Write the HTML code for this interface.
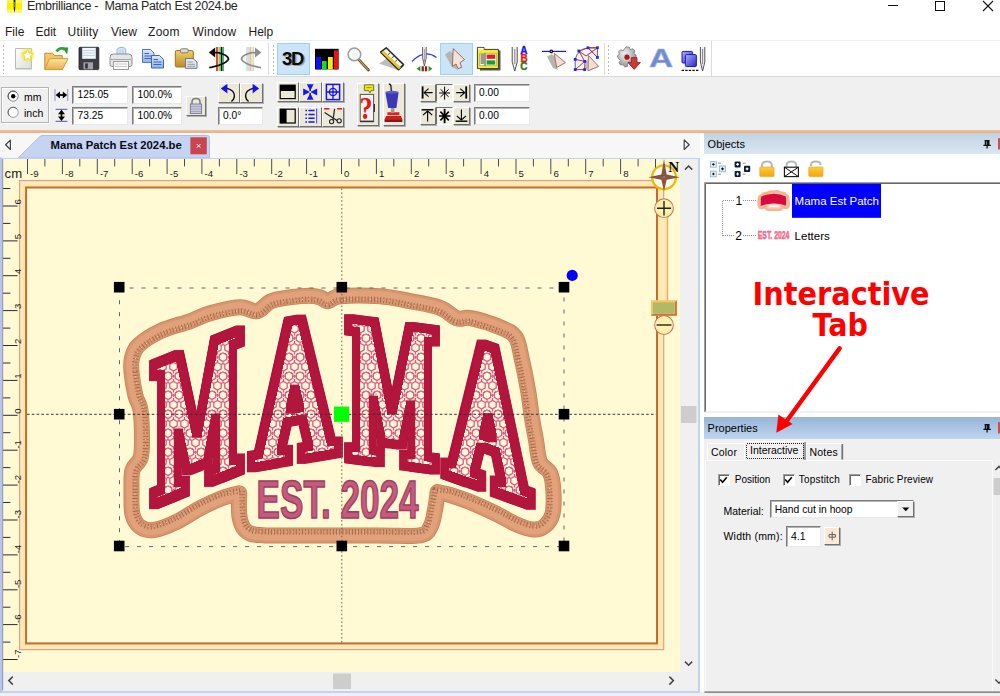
<!DOCTYPE html>
<html>
<head>
<meta charset="utf-8">
<title>Embrilliance - Mama Patch Est 2024.be</title>
<style>
html,body{margin:0;padding:0;}
body{width:1000px;height:696px;position:relative;overflow:hidden;background:#f0f0f0;font-family:"Liberation Sans",sans-serif;font-size:12px;color:#000;}
.abs{position:absolute;}
svg{display:block;}

#titlebar{left:0;top:0;width:1000px;height:20px;background:#fff;}
#menubar{left:0;top:20px;width:1000px;height:20px;background:#fff;}
#menubar span{position:absolute;top:4.5px;font-size:12px;line-height:15px;color:#1c1c1c}
#tb1{left:0;top:40px;width:1000px;height:37px;background:#fff;border-top:1px solid #f0f0f0;border-bottom:1px solid #d9d9d9;box-sizing:border-box;}
#tb2{left:0;top:76px;width:1000px;height:54px;background:#f0f0f0;}
#orange{left:0;top:130px;width:1000px;height:2.5px;background:linear-gradient(#efc29a,#e6b083);}
#tabstrip{left:0;top:132.5px;width:700px;height:25px;background:#f7f7f7;}
.inp{position:absolute;background:#fff;border:1px solid #7b7b7b;border-right-color:#e8e8e8;border-bottom-color:#e8e8e8;box-shadow:inset 1px 1px 0 #b4b4b4;box-sizing:border-box;font-size:10.2px;line-height:16px;padding-left:4.6px;color:#000;white-space:pre;}
.btn{position:absolute;background:#ece9d8;border:1px solid #fff;border-right-color:#707070;border-bottom-color:#707070;box-shadow:1px 1px 0 #b0b0b0;box-sizing:border-box;}
.btn.down{border-color:#707070 #fff #fff #707070;box-shadow:none;background:#f4f2e8;}
.hl{position:absolute;background:#cce4f7;border:1px solid #99d1ff;box-sizing:border-box;}
.grip{position:absolute;width:1px;top:4px;height:29px;background-image:linear-gradient(#b8b8b8 50%,transparent 50%);background-size:1px 4px;}
.sep{position:absolute;width:1px;top:2px;height:32px;background:#dcdcdc;}
.ico{position:absolute;overflow:visible;}


#canvasframe{left:0;top:157.5px;width:700px;height:535px;background:#c3d2f2;}
#canvas{left:3px;top:159px;width:677px;height:513px;background:#fffad4;overflow:hidden;}
#vscroll{left:680px;top:159px;width:17.5px;height:513px;background:#f0f0f0;}
#hscroll{left:3px;top:672px;width:694.5px;height:18.5px;background:#f0f0f0;}


#rightgap{left:700px;top:132.5px;width:300px;height:559.5px;background:#fff;}
.phead{position:absolute;left:704px;width:296px;font-size:11px;line-height:14px;}
.phead span{position:absolute;left:3.6px;}
.lbl{position:absolute;font-size:10.5px;line-height:12px;white-space:pre;color:#000;}
.cb{position:absolute;width:12px;height:12px;background:#fff;border:1px solid #a0a0a0;border-right-color:#fff;border-bottom-color:#fff;box-shadow:inset 1px 1px 0 #696969;box-sizing:border-box;}

</style>
</head>
<body>
<div id="titlebar" class="abs">
<svg class="abs" style="left:7px;top:0" width="16" height="13" viewBox="0 0 16 13"><rect x="0" y="0" width="15" height="12.5" fill="#fbf200"/><rect x="0" y="0" width="15" height="3" fill="#fdf64a"/><rect x="0" y="9.5" width="15" height="3" fill="#fdf760"/><path d="M6.6 0 L8.4 0 L8.2 9 L7.5 12.5 L6.8 9 Z" fill="#1a1a1a"/><path d="M7.5 2 L7.5 7" stroke="#ddd" stroke-width="0.5"/></svg>
<span class="abs" style="left:27px;top:-1px;font-size:12.5px;letter-spacing:-0.33px;white-space:pre;line-height:15px;color:#262626">Embrilliance -  Mama Patch Est 2024.be</span>
<svg class="abs" style="left:880px;top:0" width="120" height="14" viewBox="0 0 120 14"><path d="M8 5.5 H18" stroke="#111" stroke-width="1"/><rect x="55.5" y="1.5" width="9" height="9" fill="none" stroke="#111" stroke-width="1"/><path d="M103 1 L113 11 M113 1 L103 11" stroke="#111" stroke-width="1.1"/></svg>
</div>
<div id="menubar" class="abs">
<span style="left:5px">File</span><span style="left:35.5px">Edit</span><span style="left:67.5px;letter-spacing:0.25px">Utility</span><span style="left:111px">View</span><span style="left:148px;letter-spacing:0.3px">Zoom</span><span style="left:192.5px;letter-spacing:0.2px">Window</span><span style="left:248.5px">Help</span>
</div>
<div id="tb2" class="abs"><div class="abs" style="left:1px;top:11px;width:48px;height:36px;border:1px solid #b4b4b4;box-shadow:1px 1px 0 #fff, inset 1px 1px 0 #fff;box-sizing:border-box"></div>
<span class="abs" style="left:24px;top:14.5px;font-size:10.5px;line-height:12px">mm</span>
<span class="abs" style="left:24px;top:30.5px;font-size:10.5px;line-height:12px">inch</span>
<div class="inp" style="left:72px;top:9.5px;width:56px;height:18px">125.05</div>
<div class="inp" style="left:72px;top:31px;width:56px;height:18px">73.25</div>
<div class="inp" style="left:132px;top:9.5px;width:50px;height:18px">100.0%</div>
<div class="inp" style="left:132px;top:31px;width:50px;height:18px">100.0%</div>
<div class="inp" style="left:217.5px;top:30.5px;width:45px;height:18.5px">0.0°</div>
<div class="inp" style="left:473.5px;top:8px;width:56px;height:18px">0.00</div>
<div class="inp" style="left:473.5px;top:31px;width:56px;height:17.5px">0.00</div>
<div class="btn" style="left:186px;top:19.5px;width:20px;height:20.5px"></div>
<div class="btn" style="left:217.5px;top:6.5px;width:22.5px;height:20.5px"></div>
<div class="btn" style="left:240px;top:6.5px;width:22.5px;height:20.5px"></div>
<div class="btn" style="left:276.7px;top:6.200000000000003px;width:22.6px;height:20.2px"></div>
<div class="btn" style="left:299.2px;top:6.200000000000003px;width:22.6px;height:20.2px"></div>
<div class="btn" style="left:321.9px;top:6.200000000000003px;width:22.6px;height:20.2px"></div>
<div class="btn" style="left:276.7px;top:30.5px;width:22.6px;height:20.2px"></div>
<div class="btn" style="left:299.2px;top:30.5px;width:22.6px;height:20.2px"></div>
<div class="btn" style="left:321.9px;top:30.5px;width:22.6px;height:20.2px"></div>
<div class="btn" style="left:356.7px;top:6.5px;width:22px;height:43px"></div>
<div class="btn" style="left:382.5px;top:6.5px;width:22px;height:43px"></div>
<div class="btn" style="left:419.5px;top:8px;width:16.8px;height:18.4px"></div>
<div class="btn down" style="left:436.2px;top:8px;width:16.8px;height:18.4px"></div>
<div class="btn" style="left:453px;top:8px;width:16.8px;height:18.4px"></div>
<div class="btn" style="left:419.5px;top:30.799999999999997px;width:16.8px;height:18.4px"></div>
<div class="btn down" style="left:436.2px;top:30.799999999999997px;width:16.8px;height:18.4px"></div>
<div class="btn" style="left:453px;top:30.799999999999997px;width:16.8px;height:18.4px"></div>
<svg class="abs" style="left:0;top:0" width="560" height="54" viewBox="0 76 560 54">
<!-- radios -->
<circle cx="13.2" cy="96.2" r="5" fill="#fff" stroke="#8a8a8a" stroke-width="1"/><path d="M9.4 99.6 A5 5 0 0 1 16.8 92.6" fill="none" stroke="#555" stroke-width="1"/><circle cx="13.2" cy="96.2" r="2.2" fill="#000"/>
<circle cx="13.2" cy="112.4" r="5" fill="#fff" stroke="#9a9a9a" stroke-width="1"/><path d="M9.4 115.8 A5 5 0 0 1 16.8 108.8" fill="none" stroke="#666" stroke-width="1"/>
<!-- width / height glyphs -->
<path d="M55 89 V101 M67.6 89 V101" stroke="#a9a9d6" stroke-width="1.3"/>
<path d="M57.5 95 H65.5" stroke="#000" stroke-width="1.8"/><path d="M55.6 95 L60 91.6 V98.4 Z M67.2 95 L62.8 91.6 V98.4 Z" fill="#000"/>
<path d="M55.6 109.4 H67.4 M55.6 121.4 H67.4" stroke="#7070c0" stroke-width="1.1"/>
<path d="M61.5 112 V119" stroke="#000" stroke-width="1.8"/><path d="M61.5 109.8 L58 114.2 H65 Z M61.5 121 L58 116.6 H65 Z" fill="#000"/>
<!-- lock -->
<path d="M192 104.5 V101.8 Q192 98.6 196 98.6 Q200 98.6 200 101.8 V104.5" fill="none" stroke="#7a7a90" stroke-width="1.5"/>
<rect x="190.4" y="104" width="11.2" height="9.6" fill="#c7c7de" stroke="#7a7a90" stroke-width="0.9"/>
<path d="M191 106.5 H201 M191 109 H201 M191 111.5 H201" stroke="#a2a2c2" stroke-width="0.9"/>
<!-- rotate left -->
<path d="M226.5 88.2 Q234.6 90.4 234.4 96 Q234.2 99.6 231.4 101.4" fill="none" stroke="#000" stroke-width="1.3"/>
<path d="M220.8 88.4 L227.4 83.8 V93.4 Z" fill="#1414ee"/>
<!-- rotate right -->
<path d="M253.6 88.2 Q245.4 90.4 245.6 96 Q245.8 99.6 248.6 101.4" fill="none" stroke="#000" stroke-width="1.3"/>
<path d="M259.2 88.4 L252.6 83.8 V93.4 Z" fill="#1414ee"/>
<!-- grid icons row1 -->
<rect x="279.6" y="84.6" width="16.2" height="14.6" fill="#000"/><rect x="280.8" y="91" width="13.8" height="7" fill="#ece9d8"/>
<g fill="#1616f2"><path d="M306.8 84.2 H313.6 L311.2 89 H309.2 Z"/><path d="M306.8 99.8 H313.6 L311.2 95 H309.2 Z"/><path d="M303.2 88.6 V95.4 L308 93 V91 Z"/><path d="M317.2 88.6 V95.4 L312.4 93 V91 Z"/><rect x="309.4" y="88" width="1.6" height="8"/><rect x="306.4" y="91.2" width="7.6" height="1.6"/></g><circle cx="310.2" cy="92" r="1.1" fill="#fff"/>
<rect x="326.4" y="84.4" width="13.2" height="15.2" fill="#ece9d8" stroke="#1616f2" stroke-width="1.5"/><circle cx="333" cy="92" r="3.6" fill="none" stroke="#1616f2" stroke-width="1.4"/><path d="M333 84.4 V99.6 M326.4 92 H339.6" stroke="#1616f2" stroke-width="1.3"/>
<!-- grid icons row2 -->
<rect x="279.6" y="108.6" width="16.2" height="15" fill="#000"/><rect x="286.6" y="109.8" width="8" height="12.6" fill="#ece9d8"/>
<path d="M305.4 110.6 H314.6 M305.4 114.4 H314.6 M305.4 118.2 H314.6 M305.4 122 H314.6" stroke="#1616f2" stroke-width="1.5" stroke-dasharray="1.6 1.4 20"/><path d="M316.6 108.6 V123.4" stroke="#5a5af6" stroke-width="1.2"/>
<path d="M324.2 108.8 H329.4 M337.2 108.8 H342" stroke="#f01212" stroke-width="1.6"/>
<path d="M324.6 112.4 L337 120.4 M334.6 108.8 L333 120.2" stroke="#222" stroke-width="1.2"/>
<circle cx="331.6" cy="121.6" r="2.1" fill="none" stroke="#222" stroke-width="1.1"/><circle cx="339.2" cy="120.8" r="2.1" fill="none" stroke="#222" stroke-width="1.1"/>
<!-- question -->
<rect x="360.2" y="94.4" width="13.4" height="26.6" fill="#f4f4f4" stroke="#555" stroke-width="1"/><path d="M374.4 104 V112" stroke="#333" stroke-width="1.2"/><path d="M360 121.6 H374" stroke="#333" stroke-width="1.2"/>
<path d="M364.4 84.8 H373.6 V90.6 H371 L370 93 L368.6 90.6 H364.4 Z" fill="#f2e81a" stroke="#5a5a10" stroke-width="0.8"/><path d="M366.4 87.6 H371.6" stroke="#8a8a30" stroke-width="0.9"/>
<text x="359.4" y="118.6" font-family="Liberation Serif, serif" font-weight="bold" font-size="31" fill="#f01010" textLength="13" lengthAdjust="spacingAndGlyphs">?</text>
<!-- vacuum -->
<path d="M388.8 84 Q391 84 391 87 L392.8 112" fill="none" stroke="#222" stroke-width="1.4"/><path d="M392.4 86 L393 112" stroke="#ddd" stroke-width="1"/>
<path d="M385.4 92.4 H398.6 L396.4 108 H388.2 Z" fill="#3a3ab8"/><ellipse cx="392" cy="92.2" rx="6.6" ry="1.4" fill="#5c5cd0"/>
<rect x="387.4" y="112.2" width="12" height="3" fill="#f01c1c"/><path d="M386 116 H401 L402.4 119.6 H384.6 Z" fill="#d41c1c"/><rect x="384.6" y="119.2" width="17.8" height="2.8" fill="#8a1616"/>
<rect x="391" y="108" width="3.4" height="5" fill="#999"/>
<!-- align icons -->
<g stroke="#000" fill="none">
<path d="M422.6 86.4 V98.6" stroke-width="1.8"/><path d="M423.6 92.6 H432.6 M424 92.6 L428.6 88.6 M424 92.6 L428.6 96.6" stroke-width="1.1"/>
<path d="M444.6 86.6 V99.6 M439.2 93 H450 M440.6 89.4 L448.6 96.8 M448.6 89.4 L440.6 96.8" stroke-width="1"/>
<path d="M466.2 86.4 V98.6" stroke-width="1.8"/><path d="M465.2 92.6 H456.2 M464.8 92.6 L460.2 88.6 M464.8 92.6 L460.2 96.6" stroke-width="1.1"/>
<path d="M421.6 109.8 H433.4" stroke-width="1.4"/><path d="M427.6 110.6 V121.6 M427.6 111 L423 115.2 M427.6 111 L432.2 115.2" stroke-width="1.1"/>
<path d="M444.6 108.8 V123.2" stroke-width="1.9"/><path d="M439 116 H450.4 M440.4 111.6 L448.8 120.4 M448.8 111.6 L440.4 120.4" stroke-width="1.6"/>
<path d="M455.6 121.2 H467.4" stroke-width="1.4"/><path d="M461.4 120.4 V109.6 M461.4 120 L456.8 115.8 M461.4 120 L466 115.8" stroke-width="1.1"/>
</g>
</svg>
</div>
<div id="tb1" class="abs">
<div class="grip" style="left:3px"></div>
<div class="sep" style="left:268px"></div><div class="grip" style="left:273px"></div>
<div class="sep" style="left:604px"></div><div class="grip" style="left:608px"></div>
<div class="sep" style="left:711px;top:0;height:35px"></div>
<div class="hl" style="left:277px;top:2px;width:33px;height:32px"></div>
<div class="hl" style="left:440px;top:2px;width:33px;height:32px"></div>
<div class="abs" style="left:0;top:-1px">
<svg class="abs" style="left:0;top:0" width="720" height="36" viewBox="0 40 720 36">
<defs>
<linearGradient id="gFold" x1="0" y1="0" x2="0" y2="1"><stop offset="0" stop-color="#fbe3a0"/><stop offset="1" stop-color="#e9b04a"/></linearGradient>
<linearGradient id="gPaper" x1="0" y1="0" x2="1" y2="1"><stop offset="0" stop-color="#ffffff"/><stop offset="1" stop-color="#d8dcd8"/></linearGradient>
<linearGradient id="gBlueDoc" x1="0" y1="0" x2="0" y2="1"><stop offset="0" stop-color="#dfe9fb"/><stop offset="1" stop-color="#8fb0ea"/></linearGradient>
<linearGradient id="gClip" x1="0" y1="0" x2="0" y2="1"><stop offset="0" stop-color="#f2cf6a"/><stop offset="1" stop-color="#b98d28"/></linearGradient>
<linearGradient id="gBlueSq" x1="0" y1="0" x2="1" y2="1"><stop offset="0" stop-color="#a9b6f4"/><stop offset="1" stop-color="#2a22c8"/></linearGradient>
<radialGradient id="gGear" cx="0.4" cy="0.35" r="0.7"><stop offset="0" stop-color="#f4f4f4"/><stop offset="1" stop-color="#8e8e8e"/></radialGradient>
<radialGradient id="gStar" cx="0.5" cy="0.5" r="0.5"><stop offset="0.45" stop-color="#f5ea3a"/><stop offset="1" stop-color="#f5ea3a" stop-opacity="0"/></radialGradient>
</defs>
<!-- new -->
<path d="M15.5 48.5 H31.5 V68.5 H15.5 Z" fill="url(#gPaper)" stroke="#b9bdb9" stroke-width="1"/>
<path d="M15 69.6 H32" stroke="#d8d8d8" stroke-width="1"/>
<circle cx="27.6" cy="55" r="8" fill="url(#gStar)"/>
<path d="M27.6 49.6 L29.3 53.2 L33.2 53.6 L30.3 56.3 L31.1 60.2 L27.6 58.2 L24.1 60.2 L24.9 56.3 L22 53.6 L25.9 53.2 Z" fill="#fff" stroke="#ecd820" stroke-width="0.9"/>
<!-- open -->
<path d="M44.8 53.2 H52.5 L54.5 55.6 H62.2 V69.4 H44.8 Z" fill="#f3c768" stroke="#c88b2e" stroke-width="1"/>
<path d="M44.8 69.6 L49.4 58.6 H68 L62.4 69.6 Z" fill="url(#gFold)" stroke="#d29a3a" stroke-width="1"/>
<path d="M56.5 51.5 Q60 46.5 64.5 49.5" fill="none" stroke="#3aa03a" stroke-width="2.6"/>
<path d="M62 47.2 L68.2 47.6 L67.2 54.4 Z" fill="#2f9a32"/>
<!-- save -->
<path d="M79 48.3 Q79 47.3 80 47.3 H97.8 Q98.8 47.3 98.8 48.3 V68.6 Q98.8 69.6 97.8 69.6 H80 Q79 69.6 79 68.6 Z" fill="#3b3d42" stroke="#1d1e21" stroke-width="0.8"/>
<rect x="82.2" y="47.8" width="13.6" height="11" fill="#f3f6fb"/>
<path d="M82.2 50.5 H95.8 M82.2 53 H95.8 M82.2 55.5 H95.8" stroke="#c6d2e8" stroke-width="1"/>
<rect x="83.5" y="62.3" width="9.5" height="7" fill="#9fa3a8"/>
<rect x="85.2" y="63.4" width="2.6" height="5" fill="#2e3034"/>
<!-- print -->
<path d="M117 54.5 V50.5 Q117 47.4 121.4 47.4 Q125.8 47.4 125.8 50.5 V54.5 Z" fill="#d6e6fb" stroke="#8fb1e2" stroke-width="1"/>
<path d="M120 49.4 V54 M122.8 49.4 V54" stroke="#a9c6f0" stroke-width="1"/>
<path d="M110 57.5 Q110 54 113.5 54 H128.5 Q132 54 132 57.5 V64.5 Q132 66.5 130 66.5 H112 Q110 66.5 110 64.5 Z" fill="#e4e5e4" stroke="#8d8f8d" stroke-width="1"/>
<path d="M110.6 59.5 H131.4" stroke="#a6a8a6" stroke-width="1"/>
<rect x="113.5" y="61.5" width="15" height="8" fill="#fafafa" stroke="#9a9c9a" stroke-width="1"/>
<path d="M115 64 H127 M115 66.5 H127" stroke="#c9cbc9" stroke-width="1"/>
<!-- copy -->
<path d="M142.5 49.5 H150.5 L154 53 V62.5 H142.5 Z" fill="url(#gBlueDoc)" stroke="#4f79c9" stroke-width="1"/>
<path d="M144.5 53.5 H149 M144.5 56 H152 M144.5 58.5 H152" stroke="#3b63b8" stroke-width="1"/>
<path d="M151.5 55.5 H159.5 L163.5 59.5 V68 H151.5 Z" fill="url(#gBlueDoc)" stroke="#3d66bd" stroke-width="1"/>
<path d="M153.5 59.5 H158 M153.5 62 H161.5 M153.5 64.5 H161.5" stroke="#3b63b8" stroke-width="1"/>
<!-- paste -->
<rect x="175.3" y="50.5" width="18" height="16.5" rx="1.5" fill="url(#gClip)" stroke="#9a7420" stroke-width="1"/>
<rect x="180.5" y="48.8" width="7.6" height="4" rx="1" fill="#dcdcdc" stroke="#77756c" stroke-width="0.9"/>
<path d="M185.5 58.5 H193 L197 62 V68.3 H185.5 Z" fill="#e4e7ee" stroke="#6f7684" stroke-width="1"/>
<path d="M187.3 62 H193 M187.3 64.3 H195 M187.3 66.3 H195" stroke="#8b93a3" stroke-width="0.9"/>
<!-- flip horizontal (active) -->
<path d="M217 47 V71" stroke="#e01010" stroke-width="1.6"/><path d="M218.6 47 V71" stroke="#f6e11c" stroke-width="1.4"/><path d="M220 47 V71" stroke="#33c8d8" stroke-width="1.4"/><path d="M221.5 47 V71" stroke="#111" stroke-width="1.3"/><path d="M223 47 V71" stroke="#169c2a" stroke-width="1.5"/>
<path d="M213.5 52.6 H218 Q228.5 55 228.5 59.3 Q226 64 212 67.2 L209.3 67.6" fill="none" stroke="#0a0a0a" stroke-width="1.7"/>
<path d="M208.8 52.6 L215.2 47.6 V57.6 Z" fill="#0a0a0a"/>
<!-- flip horizontal (gray) -->
<path d="M247 47 V71" stroke="#b6e4dc" stroke-width="1.5"/><path d="M248.6 47 V71" stroke="#dcdcdc" stroke-width="1.3"/><path d="M250.2 47 V71" stroke="#f4b0b0" stroke-width="1.5"/><path d="M251.8 47 V71" stroke="#f3eba0" stroke-width="1.4"/><path d="M253.3 47 V71" stroke="#bfe6c4" stroke-width="1.4"/>
<path d="M256.5 52.6 H252 Q241.5 55 241.5 59.3 Q244 64 258 67.2 L261 67.6" fill="none" stroke="#8e8e8e" stroke-width="1.7"/>
<path d="M261.4 52.6 L255 47.6 V57.6 Z" fill="#8e8e8e"/>
<!-- 3D -->
<text x="283.3" y="66" font-family="Liberation Sans, sans-serif" font-weight="bold" font-size="18.5" letter-spacing="-1.2" fill="#9a9a9a">3D</text>
<text x="282" y="64.8" font-family="Liberation Sans, sans-serif" font-weight="bold" font-size="18.5" letter-spacing="-1.2" fill="#0a0a0a">3D</text>
<!-- bars -->
<rect x="315" y="48.8" width="23.6" height="20.6" fill="#000"/>
<rect x="316" y="56.8" width="5" height="12.6" fill="#0a12f0"/>
<rect x="322" y="61" width="4.6" height="8.4" fill="#12e020"/>
<rect x="328" y="57" width="4.8" height="12.4" fill="#f4ea12"/>
<rect x="334" y="50.4" width="4.2" height="19" fill="#f01212"/>
<!-- magnifier -->
<path d="M358.8 59.6 L368.4 70" stroke="#6b4a2a" stroke-width="2.8" stroke-linecap="round"/>
<path d="M358.8 59.6 L368 69.6" stroke="#c89a5a" stroke-width="1.2" stroke-linecap="round"/>
<circle cx="354.4" cy="54.4" r="6.3" fill="#f6f6f6" stroke="#9c9c9c" stroke-width="1.5"/>
<path d="M350.3 53.4 Q351 50.4 354 50" fill="none" stroke="#fff" stroke-width="1.4"/>
<!-- ruler -->
<path d="M379 63.5 L392 55.5 L404 66.5 L399 70.5 Z" fill="#bdbdbd"/>
<path d="M380.6 52.2 L386.2 47.8 L403.6 64.6 L398.4 69.6 Z" fill="#f6f6f2" stroke="#2a2a2a" stroke-width="1.5" stroke-linejoin="round"/>
<path d="M381.4 52.6 L383.6 50.8 L400.8 67.4 L398.8 69.2 Z" fill="#f0c21e"/>
<path d="M388 54.8 L390.4 52.6 M391.6 58.2 L394 56 M395.2 61.6 L397.6 59.4" stroke="#444" stroke-width="0.9"/>
<!-- needle with arc -->
<path d="M412 61.5 Q424 48.5 436.5 57.4" fill="none" stroke="#2c38f0" stroke-width="1.2"/>
<path d="M422.6 47 V58 L424.4 66 L426.2 58 V47" fill="#f2f2f2" stroke="#555" stroke-width="0.9"/>
<path d="M424.4 49 V62" stroke="#777" stroke-width="0.7"/>
<path d="M416.6 68.8 L420.4 66 V71.6 Z M432.4 68.8 L428.6 66 V71.6 Z" fill="#1c9c2c"/>
<rect x="421.6" y="66.3" width="2.3" height="5" fill="#a01818"/><rect x="424.9" y="66.3" width="2.3" height="5" fill="#a01818"/>
<!-- pointer -->
<path d="M445 54.5 L450 51 L462 61 L456 64 L458 70 L452 67 Z" fill="#b5b5b5"/>
<path d="M453.2 48.6 L464.6 59.6 L460 62.6 L461.6 67.4 L458 68.6 L456 64 L452.4 66.4 Z" fill="#f3e2d8" stroke="#9c6c64" stroke-width="1" stroke-linejoin="round"/>
<!-- list / folder icon -->
<path d="M480 50.5 H500.5 V70.5 H480 Z" fill="#555"/>
<path d="M477.4 47.4 H484 V49.4 H498.4 V68.6 H477.4 Z" fill="#f6f01c" stroke="#3a3a3a" stroke-width="1"/>
<rect x="477.9" y="47.9" width="5.6" height="1.6" fill="#fff"/>
<rect x="479.8" y="53.2" width="16.4" height="12.6" fill="#fdfdf4" stroke="#8a8a60" stroke-width="0.6"/>
<path d="M480.6 55 H484 M480.6 57 H484 M480.6 59 H484 M480.6 61 H484 M480.6 63 H484" stroke="#222" stroke-width="0.9"/>
<path d="M485 53.4 V65.6" stroke="#222" stroke-width="0.9"/>
<rect x="486.6" y="54.6" width="8.6" height="4.2" fill="#f01818"/><rect x="486.6" y="60.4" width="8.6" height="4.2" fill="#1c9a2c"/>
<!-- needle ABC -->
<path d="M512.2 47 V62 L514.8 71 L517.2 62 V47" fill="#f0f0f0" stroke="#555" stroke-width="1"/>
<path d="M514.8 49 V64" stroke="#777" stroke-width="0.9"/>
<text x="520.2" y="54" font-family="Liberation Sans, sans-serif" font-weight="bold" font-size="10" fill="#1010f0" stroke="#1010f0" stroke-width="0.3">A</text>
<text x="520.4" y="62" font-family="Liberation Sans, sans-serif" font-weight="bold" font-size="10" fill="#f01010" stroke="#f01010" stroke-width="0.3">B</text>
<text x="520.2" y="70" font-family="Liberation Sans, sans-serif" font-weight="bold" font-size="10" fill="#2a7a10" stroke="#2a7a10" stroke-width="0.3">C</text>
<!-- node edit -->
<path d="M542 51.4 H566" stroke="#1818f0" stroke-width="1.2"/>
<path d="M547 56.5 L552 54 L562 64 L556 66 L558 70 L553 68 Z" fill="#b5b5b5"/>
<path d="M554.2 53.2 L565.4 62.6 L556.6 67.6 Z" fill="#f1dfd3" stroke="#a0726a" stroke-width="1" stroke-linejoin="round"/>
<circle cx="551.3" cy="51.4" r="1.9" fill="#111"/><circle cx="551.3" cy="51.4" r="0.6" fill="#ddd"/>
<!-- mesh -->
<path d="M575.2 69.6 V59 Q578 49.4 588 47.8 H597.4 V57.4" fill="#eef2fb" stroke="#555" stroke-width="0.9"/>
<path d="M575.2 59.4 L584.8 61.4 L575.2 69.6 H584.6 L584.8 61.4 L578.8 51 L588 47.8 L597.4 57.4 L588 47.8 L597.4 47.8 L586 56 L578.8 51" fill="none" stroke="#c03030" stroke-width="1"/>
<path d="M588.4 55.4 L598.6 66.4 L588 70.8 Z" fill="#f1dfd3" stroke="#a0726a" stroke-width="1" stroke-linejoin="round"/>
<path d="M584.5 62.5 L588 60 V70.6 L585 69 Z" fill="#b5b5b5"/>
<g fill="#1a2af4"><rect x="573.8" y="58" width="2.8" height="2.8"/><rect x="573.8" y="68.2" width="2.8" height="2.8"/><rect x="583.2" y="68.2" width="2.8" height="2.8"/><rect x="583.4" y="60" width="2.8" height="2.8"/><rect x="577.4" y="49.6" width="2.8" height="2.8"/><rect x="586.6" y="46.4" width="2.8" height="2.8"/><rect x="596" y="46.4" width="2.8" height="2.8"/><rect x="596" y="56" width="2.8" height="2.8"/></g>
<!-- gear -->
<path d="M626 46.8 L629.2 47.2 L630.2 49.6 L633 48.8 L635 51 L633.8 53.6 L636 55 L636 58 L633.6 59 L634 62 L631.6 63.6 L629.6 62 L627.4 63.6 L627.6 66.4 L624.6 67 L623 64.6 L620.4 65 L619 62.6 L620.6 60.4 L618.4 58.6 L617.2 56 L619.4 54.4 L618.6 51.6 L620.8 49.8 L623.2 50.8 L624.6 48.6 Z" fill="url(#gGear)" stroke="#7a7a7a" stroke-width="0.8"/>
<circle cx="626.6" cy="57" r="3.8" fill="#d8d8d8"/>
<circle cx="627" cy="57.2" r="2.6" fill="#b01818"/>
<path d="M631.4 57.6 H637 V62.6 H640.4 L634.2 69.4 L628 62.6 H631.4 Z" fill="#cc3a3a" stroke="#8e1c1c" stroke-width="0.8"/>
<!-- A -->
<text x="649" y="67.2" font-family="Liberation Sans, sans-serif" font-weight="bold" font-size="25" fill="#6f8ad0" stroke="#9fb2e2" stroke-width="0.6" textLength="24" lengthAdjust="spacingAndGlyphs">A</text>
<!-- copy + needle -->
<rect x="682" y="51.4" width="10.6" height="11.6" rx="1" fill="url(#gBlueSq)" stroke="#1c1ab4" stroke-width="1"/>
<rect x="685.4" y="54.6" width="11" height="12" rx="1" fill="url(#gBlueSq)" stroke="#1c1ab4" stroke-width="1"/>
<path d="M681.6 70.4 H699" stroke="#111" stroke-width="1.4" stroke-dasharray="2.4 1.2"/>
<path d="M700.4 47 V62 L702.6 71 L704.8 62 V47" fill="#f0f0f0" stroke="#555" stroke-width="1"/>
<path d="M702.6 49 V64" stroke="#777" stroke-width="0.9"/>
</svg>
</div>
</div>
<div id="orange" class="abs"></div>
<div id="tabstrip" class="abs">
<svg class="abs" style="left:0;top:0" width="700" height="25" viewBox="0 132.5 700 25">
<path d="M18 157.5 L39.5 136.4 Q41 135 43 135 H207.5 Q209.5 135 209.5 137 V157.5 Z" fill="#c4d4f2" stroke="#aebfe6" stroke-width="1"/>
<path d="M10.4 139.6 L10.4 149 L5.6 144.3 Z" fill="none" stroke="#444" stroke-width="1.2" stroke-linejoin="round"/>
<path d="M684.2 139.4 L684.2 149 L689.2 144.2 Z" fill="none" stroke="#444" stroke-width="1.2" stroke-linejoin="round"/>
<rect x="190.4" y="136.8" width="16.4" height="17" fill="#c9454f"/>
<path d="M196.8 143.6 L200.4 147.2 M200.4 143.6 L196.8 147.2" stroke="#fff" stroke-width="1"/>
</svg>
<span class="abs" style="left:50.5px;top:5px;font-size:11.3px;font-weight:bold;line-height:14px;white-space:pre;color:#0a0a14">Mama Patch Est 2024.be</span>
</div>
<div id="canvasframe" class="abs"></div>
<div id="canvas" class="abs">
<svg class="abs" style="left:0;top:0" width="677" height="513" viewBox="3 159 677 513" font-family="Liberation Sans, sans-serif">
<rect x="19" y="180" width="645.3" height="470.20000000000005" fill="#e2a572"/>
<rect x="20.2" y="181.2" width="642.9" height="467.80000000000007" fill="#ffe6cf"/>
<rect x="22.6" y="183.9" width="638.4" height="462.70000000000005" fill="#fdec9c"/>
<rect x="25.1" y="186.5" width="632.9" height="457.90000000000003" fill="#c26a3a"/>
<rect x="27.1" y="188.5" width="628.9" height="453.90000000000003" fill="#fffad4"/>
<rect x="663.8" y="200" width="4.4" height="105" fill="#e9a870"/>
<rect x="661.4" y="200" width="5.4" height="105" fill="#fdec9c"/>
<rect x="661.2" y="200" width="2.8" height="105" fill="#ffe6cf"/>
<path d="M27.5 159 V174" stroke="#4a4a55" stroke-width="1"/>
<text x="30.1" y="177.4" font-size="9.6" fill="#1a1a2a">-9</text>
<path d="M44.9 159 V166.4" stroke="#4a4a55" stroke-width="1"/>
<path d="M62.4 159 V174" stroke="#4a4a55" stroke-width="1"/>
<text x="65.0" y="177.4" font-size="9.6" fill="#1a1a2a">-8</text>
<path d="M79.8 159 V166.4" stroke="#4a4a55" stroke-width="1"/>
<path d="M97.3 159 V174" stroke="#4a4a55" stroke-width="1"/>
<text x="99.9" y="177.4" font-size="9.6" fill="#1a1a2a">-7</text>
<path d="M114.7 159 V166.4" stroke="#4a4a55" stroke-width="1"/>
<path d="M132.2 159 V174" stroke="#4a4a55" stroke-width="1"/>
<text x="134.8" y="177.4" font-size="9.6" fill="#1a1a2a">-6</text>
<path d="M149.6 159 V166.4" stroke="#4a4a55" stroke-width="1"/>
<path d="M167.1 159 V174" stroke="#4a4a55" stroke-width="1"/>
<text x="169.7" y="177.4" font-size="9.6" fill="#1a1a2a">-5</text>
<path d="M184.5 159 V166.4" stroke="#4a4a55" stroke-width="1"/>
<path d="M201.9 159 V174" stroke="#4a4a55" stroke-width="1"/>
<text x="204.5" y="177.4" font-size="9.6" fill="#1a1a2a">-4</text>
<path d="M219.4 159 V166.4" stroke="#4a4a55" stroke-width="1"/>
<path d="M236.8 159 V174" stroke="#4a4a55" stroke-width="1"/>
<text x="239.4" y="177.4" font-size="9.6" fill="#1a1a2a">-3</text>
<path d="M254.3 159 V166.4" stroke="#4a4a55" stroke-width="1"/>
<path d="M271.7 159 V174" stroke="#4a4a55" stroke-width="1"/>
<text x="274.3" y="177.4" font-size="9.6" fill="#1a1a2a">-2</text>
<path d="M289.2 159 V166.4" stroke="#4a4a55" stroke-width="1"/>
<path d="M306.6 159 V174" stroke="#4a4a55" stroke-width="1"/>
<text x="309.2" y="177.4" font-size="9.6" fill="#1a1a2a">-1</text>
<path d="M324.1 159 V166.4" stroke="#4a4a55" stroke-width="1"/>
<path d="M341.5 159 V174" stroke="#4a4a55" stroke-width="1"/>
<text x="344.1" y="177.4" font-size="9.6" fill="#1a1a2a">0</text>
<path d="M358.9 159 V166.4" stroke="#4a4a55" stroke-width="1"/>
<path d="M376.4 159 V174" stroke="#4a4a55" stroke-width="1"/>
<text x="379.0" y="177.4" font-size="9.6" fill="#1a1a2a">1</text>
<path d="M393.8 159 V166.4" stroke="#4a4a55" stroke-width="1"/>
<path d="M411.3 159 V174" stroke="#4a4a55" stroke-width="1"/>
<text x="413.9" y="177.4" font-size="9.6" fill="#1a1a2a">2</text>
<path d="M428.7 159 V166.4" stroke="#4a4a55" stroke-width="1"/>
<path d="M446.2 159 V174" stroke="#4a4a55" stroke-width="1"/>
<text x="448.8" y="177.4" font-size="9.6" fill="#1a1a2a">3</text>
<path d="M463.6 159 V166.4" stroke="#4a4a55" stroke-width="1"/>
<path d="M481.1 159 V174" stroke="#4a4a55" stroke-width="1"/>
<text x="483.7" y="177.4" font-size="9.6" fill="#1a1a2a">4</text>
<path d="M498.5 159 V166.4" stroke="#4a4a55" stroke-width="1"/>
<path d="M516.0 159 V174" stroke="#4a4a55" stroke-width="1"/>
<text x="518.6" y="177.4" font-size="9.6" fill="#1a1a2a">5</text>
<path d="M533.4 159 V166.4" stroke="#4a4a55" stroke-width="1"/>
<path d="M550.8 159 V174" stroke="#4a4a55" stroke-width="1"/>
<text x="553.4" y="177.4" font-size="9.6" fill="#1a1a2a">6</text>
<path d="M568.3 159 V166.4" stroke="#4a4a55" stroke-width="1"/>
<path d="M585.7 159 V174" stroke="#4a4a55" stroke-width="1"/>
<text x="588.3" y="177.4" font-size="9.6" fill="#1a1a2a">7</text>
<path d="M603.2 159 V166.4" stroke="#4a4a55" stroke-width="1"/>
<path d="M620.6 159 V174" stroke="#4a4a55" stroke-width="1"/>
<text x="623.2" y="177.4" font-size="9.6" fill="#1a1a2a">8</text>
<path d="M638.1 159 V166.4" stroke="#4a4a55" stroke-width="1"/>
<path d="M655.5 159 V174" stroke="#4a4a55" stroke-width="1"/>
<path d="M3 659.5 H17.6" stroke="#2a2a35" stroke-width="1"/>
<text transform="translate(21.2 657.9) rotate(-90)" font-size="9.6" fill="#1a1a2a">-7</text>
<path d="M3 642.1 H10.4" stroke="#2a2a35" stroke-width="1"/>
<path d="M3 624.6 H17.6" stroke="#2a2a35" stroke-width="1"/>
<text transform="translate(21.2 623.0) rotate(-90)" font-size="9.6" fill="#1a1a2a">-6</text>
<path d="M3 607.2 H10.4" stroke="#2a2a35" stroke-width="1"/>
<path d="M3 589.8 H17.6" stroke="#2a2a35" stroke-width="1"/>
<text transform="translate(21.2 588.1) rotate(-90)" font-size="9.6" fill="#1a1a2a">-5</text>
<path d="M3 572.3 H10.4" stroke="#2a2a35" stroke-width="1"/>
<path d="M3 554.9 H17.6" stroke="#2a2a35" stroke-width="1"/>
<text transform="translate(21.2 553.3) rotate(-90)" font-size="9.6" fill="#1a1a2a">-4</text>
<path d="M3 537.4 H10.4" stroke="#2a2a35" stroke-width="1"/>
<path d="M3 520.0 H17.6" stroke="#2a2a35" stroke-width="1"/>
<text transform="translate(21.2 518.4) rotate(-90)" font-size="9.6" fill="#1a1a2a">-3</text>
<path d="M3 502.5 H10.4" stroke="#2a2a35" stroke-width="1"/>
<path d="M3 485.1 H17.6" stroke="#2a2a35" stroke-width="1"/>
<text transform="translate(21.2 483.5) rotate(-90)" font-size="9.6" fill="#1a1a2a">-2</text>
<path d="M3 467.6 H10.4" stroke="#2a2a35" stroke-width="1"/>
<path d="M3 450.2 H17.6" stroke="#2a2a35" stroke-width="1"/>
<text transform="translate(21.2 448.6) rotate(-90)" font-size="9.6" fill="#1a1a2a">-1</text>
<path d="M3 432.7 H10.4" stroke="#2a2a35" stroke-width="1"/>
<path d="M3 415.3 H17.6" stroke="#2a2a35" stroke-width="1"/>
<text transform="translate(21.2 413.7) rotate(-90)" font-size="9.6" fill="#1a1a2a">0</text>
<path d="M3 397.9 H10.4" stroke="#2a2a35" stroke-width="1"/>
<path d="M3 380.4 H17.6" stroke="#2a2a35" stroke-width="1"/>
<text transform="translate(21.2 378.8) rotate(-90)" font-size="9.6" fill="#1a1a2a">1</text>
<path d="M3 363.0 H10.4" stroke="#2a2a35" stroke-width="1"/>
<path d="M3 345.5 H17.6" stroke="#2a2a35" stroke-width="1"/>
<text transform="translate(21.2 343.9) rotate(-90)" font-size="9.6" fill="#1a1a2a">2</text>
<path d="M3 328.1 H10.4" stroke="#2a2a35" stroke-width="1"/>
<path d="M3 310.6 H17.6" stroke="#2a2a35" stroke-width="1"/>
<text transform="translate(21.2 309.0) rotate(-90)" font-size="9.6" fill="#1a1a2a">3</text>
<path d="M3 293.2 H10.4" stroke="#2a2a35" stroke-width="1"/>
<path d="M3 275.7 H17.6" stroke="#2a2a35" stroke-width="1"/>
<text transform="translate(21.2 274.1) rotate(-90)" font-size="9.6" fill="#1a1a2a">4</text>
<path d="M3 258.3 H10.4" stroke="#2a2a35" stroke-width="1"/>
<path d="M3 240.9 H17.6" stroke="#2a2a35" stroke-width="1"/>
<text transform="translate(21.2 239.3) rotate(-90)" font-size="9.6" fill="#1a1a2a">5</text>
<path d="M3 223.4 H10.4" stroke="#2a2a35" stroke-width="1"/>
<path d="M3 206.0 H17.6" stroke="#2a2a35" stroke-width="1"/>
<text transform="translate(21.2 204.4) rotate(-90)" font-size="9.6" fill="#1a1a2a">6</text>
<path d="M3 188.5 H10.4" stroke="#2a2a35" stroke-width="1"/>
<text x="4.6" y="177.6" font-size="13.5" fill="#1a1a2a" textLength="17.5" lengthAdjust="spacingAndGlyphs">cm</text>

<path d="M131.5 372.0 C130.9 365.7 130.8 362.6 132.0 358.1 C133.1 353.7 133.6 349.9 138.4 345.4 C143.1 340.9 151.6 335.2 160.2 331.2 C168.9 327.1 181.8 324.2 190.2 321.2 C198.5 318.2 201.8 315.5 210.1 313.2 C218.4 310.9 232.2 307.5 240.0 307.2 C247.8 306.9 251.9 312.2 257.1 311.2 C262.3 310.2 265.5 303.5 271.2 301.2 C276.9 298.8 284.8 298.1 291.1 297.2 C297.4 296.3 304.2 295.7 309.0 295.7 C313.8 295.7 316.7 296.3 319.9 297.2 C323.0 298.1 324.7 301.4 328.0 301.2 C331.4 301.0 331.4 297.0 340.0 296.2 C348.7 295.4 368.3 295.4 380.0 296.2 C391.6 297.0 399.9 299.3 409.9 301.2 C419.9 303.1 432.0 304.8 439.8 307.7 C447.7 310.5 451.7 316.4 456.8 318.2 C462.0 319.9 463.7 316.7 470.9 318.2 C478.1 319.7 492.4 324.0 499.8 327.2 C507.3 330.3 511.9 331.5 515.6 337.0 C519.3 342.5 519.9 351.3 522.0 360.1 C524.1 369.0 526.3 380.4 528.0 390.1 C529.7 399.7 530.7 409.7 532.0 418.1 C533.3 426.4 534.7 432.7 536.0 440.1 C537.3 447.4 537.7 456.8 540.0 462.2 C542.4 467.6 547.8 468.1 550.0 472.7 C552.3 477.4 552.9 483.2 553.3 490.0 C553.7 496.9 553.9 507.9 552.5 513.9 C551.1 519.9 547.9 523.5 544.7 526.1 C541.4 528.7 537.7 529.8 533.0 529.5 C528.4 529.2 522.7 527.1 516.7 524.5 C510.6 522.0 504.5 517.8 496.7 514.0 C489.0 510.3 478.0 505.2 470.2 502.0 C462.4 498.9 455.6 496.7 450.1 495.0 C444.7 493.4 437.6 492.1 437.6 492.1 C437.6 492.1 436.2 504.1 435.0 509.9 C433.8 515.7 433.1 522.5 430.6 526.7 C428.1 531.0 428.3 533.8 419.9 535.3 C411.5 536.8 400.0 535.5 380.0 535.5 C360.0 535.5 319.5 535.5 300.0 535.5 C280.5 535.5 271.8 535.9 263.0 535.3 C254.2 534.7 251.2 534.9 247.3 532.1 C243.4 529.3 241.1 524.9 239.8 518.4 C238.4 511.9 239.2 493.2 239.2 493.2 C239.2 493.2 228.8 495.6 222.3 498.0 C215.8 500.5 207.9 504.1 200.3 508.1 C192.6 512.1 184.0 518.4 176.3 522.0 C168.6 525.7 159.9 529.2 153.9 530.0 C147.9 530.8 143.9 529.7 140.3 527.1 C136.7 524.5 134.0 520.6 132.5 514.4 C131.0 508.2 131.5 497.4 131.5 490.0 C131.5 482.6 131.0 475.4 132.5 470.1 C134.0 464.8 138.9 463.2 140.5 458.2 C142.1 453.1 142.0 448.0 142.0 440.0 C142.0 432.0 141.6 417.3 140.5 409.9 C139.4 402.6 137.0 402.2 135.5 395.9 C134.0 389.6 132.1 378.2 131.5 372.0 Z" fill="none" stroke="#c4835c" stroke-width="16" stroke-linejoin="round"/>
<path d="M131.5 372.0 C130.9 365.7 130.8 362.6 132.0 358.1 C133.1 353.7 133.6 349.9 138.4 345.4 C143.1 340.9 151.6 335.2 160.2 331.2 C168.9 327.1 181.8 324.2 190.2 321.2 C198.5 318.2 201.8 315.5 210.1 313.2 C218.4 310.9 232.2 307.5 240.0 307.2 C247.8 306.9 251.9 312.2 257.1 311.2 C262.3 310.2 265.5 303.5 271.2 301.2 C276.9 298.8 284.8 298.1 291.1 297.2 C297.4 296.3 304.2 295.7 309.0 295.7 C313.8 295.7 316.7 296.3 319.9 297.2 C323.0 298.1 324.7 301.4 328.0 301.2 C331.4 301.0 331.4 297.0 340.0 296.2 C348.7 295.4 368.3 295.4 380.0 296.2 C391.6 297.0 399.9 299.3 409.9 301.2 C419.9 303.1 432.0 304.8 439.8 307.7 C447.7 310.5 451.7 316.4 456.8 318.2 C462.0 319.9 463.7 316.7 470.9 318.2 C478.1 319.7 492.4 324.0 499.8 327.2 C507.3 330.3 511.9 331.5 515.6 337.0 C519.3 342.5 519.9 351.3 522.0 360.1 C524.1 369.0 526.3 380.4 528.0 390.1 C529.7 399.7 530.7 409.7 532.0 418.1 C533.3 426.4 534.7 432.7 536.0 440.1 C537.3 447.4 537.7 456.8 540.0 462.2 C542.4 467.6 547.8 468.1 550.0 472.7 C552.3 477.4 552.9 483.2 553.3 490.0 C553.7 496.9 553.9 507.9 552.5 513.9 C551.1 519.9 547.9 523.5 544.7 526.1 C541.4 528.7 537.7 529.8 533.0 529.5 C528.4 529.2 522.7 527.1 516.7 524.5 C510.6 522.0 504.5 517.8 496.7 514.0 C489.0 510.3 478.0 505.2 470.2 502.0 C462.4 498.9 455.6 496.7 450.1 495.0 C444.7 493.4 437.6 492.1 437.6 492.1 C437.6 492.1 436.2 504.1 435.0 509.9 C433.8 515.7 433.1 522.5 430.6 526.7 C428.1 531.0 428.3 533.8 419.9 535.3 C411.5 536.8 400.0 535.5 380.0 535.5 C360.0 535.5 319.5 535.5 300.0 535.5 C280.5 535.5 271.8 535.9 263.0 535.3 C254.2 534.7 251.2 534.9 247.3 532.1 C243.4 529.3 241.1 524.9 239.8 518.4 C238.4 511.9 239.2 493.2 239.2 493.2 C239.2 493.2 228.8 495.6 222.3 498.0 C215.8 500.5 207.9 504.1 200.3 508.1 C192.6 512.1 184.0 518.4 176.3 522.0 C168.6 525.7 159.9 529.2 153.9 530.0 C147.9 530.8 143.9 529.7 140.3 527.1 C136.7 524.5 134.0 520.6 132.5 514.4 C131.0 508.2 131.5 497.4 131.5 490.0 C131.5 482.6 131.0 475.4 132.5 470.1 C134.0 464.8 138.9 463.2 140.5 458.2 C142.1 453.1 142.0 448.0 142.0 440.0 C142.0 432.0 141.6 417.3 140.5 409.9 C139.4 402.6 137.0 402.2 135.5 395.9 C134.0 389.6 132.1 378.2 131.5 372.0 Z" fill="none" stroke="#d9966e" stroke-width="14.4" stroke-linejoin="round"/>
<path d="M129.9 372.1 C129.3 365.7 129.2 362.4 130.4 357.7 C131.7 353.1 132.4 348.9 137.2 344.2 C142.1 339.5 150.8 333.8 159.5 329.7 C168.3 325.6 181.3 322.7 189.6 319.7 C198.0 316.7 201.3 314.0 209.7 311.6 C218.1 309.3 232.1 305.9 240.0 305.6 C247.8 305.3 251.7 310.6 256.8 309.6 C261.9 308.6 264.9 302.0 270.6 299.7 C276.3 297.3 284.4 296.5 290.8 295.6 C297.2 294.7 304.1 294.1 309.0 294.1 C313.9 294.1 317.1 294.7 320.3 295.6 C323.5 296.6 324.7 299.8 327.9 299.6 C331.2 299.4 331.2 295.4 339.9 294.6 C348.6 293.8 368.4 293.8 380.1 294.6 C391.8 295.4 400.2 297.7 410.2 299.6 C420.3 301.5 432.5 303.3 440.4 306.2 C448.2 309.0 452.2 314.9 457.4 316.7 C462.5 318.4 464.0 315.1 471.2 316.6 C478.4 318.1 492.8 322.4 500.4 325.7 C508.0 328.9 513.1 330.4 516.9 336.1 C520.8 341.8 521.5 350.8 523.6 359.7 C525.7 368.7 527.9 380.1 529.6 389.8 C531.3 399.5 532.3 409.5 533.6 417.8 C534.9 426.2 536.3 432.5 537.6 439.8 C538.9 447.1 539.2 456.2 541.5 461.6 C543.8 466.9 549.3 467.3 551.5 472.0 C553.7 476.8 554.5 482.9 554.9 489.9 C555.3 497.0 555.6 508.0 554.1 514.3 C552.5 520.5 549.2 524.6 545.7 527.4 C542.2 530.2 537.9 531.3 532.9 531.1 C528.0 530.9 522.2 528.6 516.1 526.0 C509.9 523.4 503.8 519.2 496.0 515.5 C488.3 511.7 477.3 506.7 469.6 503.5 C461.9 500.4 454.8 498.3 449.7 496.6 C444.5 494.8 438.8 493.3 438.8 493.3 C438.8 493.3 437.7 504.5 436.6 510.2 C435.4 515.9 434.7 523.1 431.9 527.6 C429.2 532.0 428.8 535.3 420.2 536.9 C411.5 538.5 400.0 537.1 380.0 537.1 C360.0 537.1 319.5 537.1 300.0 537.1 C280.5 537.1 271.9 537.5 262.9 536.9 C254.0 536.3 250.5 536.4 246.4 533.4 C242.2 530.4 239.6 525.3 238.2 518.7 C236.8 512.2 238.0 494.2 238.0 494.2 C238.0 494.2 229.0 497.0 222.9 499.5 C216.7 502.1 208.7 505.5 201.0 509.5 C193.4 513.5 184.8 519.8 177.0 523.5 C169.2 527.2 160.4 530.8 154.2 531.6 C147.9 532.4 143.2 531.2 139.4 528.4 C135.5 525.6 132.5 521.2 130.9 514.8 C129.4 508.4 129.9 497.5 129.9 490.0 C129.9 482.5 129.4 475.1 130.9 469.7 C132.4 464.3 137.4 462.6 139.0 457.7 C140.5 452.7 140.4 447.9 140.4 440.0 C140.4 432.1 140.0 417.5 138.9 410.2 C137.8 402.9 135.4 402.6 133.9 396.3 C132.4 389.9 130.5 378.5 129.9 372.1 Z" fill="none" stroke="#e1a27b" stroke-width="6.5" stroke-linejoin="round"/>
<path d="M135.1 371.6 C134.5 365.6 134.5 363.0 135.5 359.0 C136.4 355.1 136.5 352.1 140.8 348.0 C145.2 343.9 153.3 338.3 161.7 334.4 C170.2 330.5 183.2 327.5 191.4 324.6 C199.6 321.6 203.0 318.9 211.1 316.6 C219.2 314.4 232.4 311.1 240.2 310.8 C248.0 310.5 252.4 315.8 257.8 314.7 C263.2 313.7 266.9 306.8 272.6 304.5 C278.2 302.2 285.5 301.6 291.6 300.8 C297.7 299.9 304.5 299.3 309.0 299.3 C313.5 299.3 315.7 299.7 318.9 300.6 C322.1 301.6 324.6 304.9 328.2 304.8 C331.8 304.7 331.8 300.6 340.4 299.8 C349.0 298.9 368.2 299.0 379.7 299.8 C391.2 300.6 399.4 302.8 409.2 304.7 C419.0 306.6 430.9 308.2 438.6 311.1 C446.3 313.9 450.4 319.8 455.7 321.6 C460.9 323.4 463.0 320.2 470.2 321.7 C477.3 323.2 491.3 327.6 498.4 330.5 C505.5 333.4 509.2 333.9 512.6 339.0 C515.9 344.1 516.5 352.3 518.5 360.9 C520.5 369.6 522.8 381.1 524.5 390.7 C526.1 400.3 527.1 410.3 528.5 418.6 C529.8 427.0 531.1 433.2 532.5 440.7 C533.8 448.2 534.3 458.0 536.7 463.6 C539.1 469.2 544.6 469.8 546.8 474.3 C549.0 478.7 549.3 483.8 549.7 490.2 C550.1 496.7 550.2 507.5 549.0 513.0 C547.8 518.6 545.1 521.2 542.4 523.3 C539.8 525.4 537.3 526.3 533.2 525.9 C529.2 525.6 523.9 523.7 518.1 521.2 C512.3 518.7 506.0 514.6 498.3 510.8 C490.5 507.1 479.4 501.9 471.6 498.7 C463.7 495.5 457.3 493.1 451.2 491.6 C445.1 490.1 435.1 489.6 435.1 489.6 C435.1 489.6 432.8 503.3 431.5 509.2 C430.2 515.1 429.5 521.1 427.5 524.9 C425.4 528.7 427.2 530.6 419.3 531.8 C411.4 532.9 399.9 531.9 380.0 531.9 C360.1 531.9 319.5 531.9 300.0 531.9 C280.6 531.9 271.7 532.2 263.3 531.7 C254.8 531.3 252.7 531.5 249.4 529.2 C246.1 526.8 244.6 524.1 243.3 517.7 C242.1 511.3 241.9 490.8 241.9 490.8 C241.9 490.8 228.3 492.3 221.0 494.7 C213.8 497.0 206.3 500.8 198.6 504.9 C190.9 508.9 182.3 515.2 174.7 518.8 C167.2 522.4 158.8 525.5 153.4 526.4 C148.0 527.3 145.3 526.3 142.4 524.2 C139.5 522.0 137.2 519.3 136.0 513.6 C134.8 507.9 135.1 497.1 135.1 490.0 C135.1 482.9 134.5 476.2 135.9 471.1 C137.4 466.0 142.3 464.4 143.9 459.2 C145.5 454.1 145.6 448.3 145.6 440.0 C145.6 431.7 145.2 416.9 144.1 409.4 C143.0 401.9 140.5 401.4 139.0 395.1 C137.5 388.8 135.7 377.6 135.1 371.6 Z" fill="none" stroke="#a4684a" stroke-width="5.6" stroke-dasharray="0.9 2.2" stroke-linejoin="round"/>
<path d="M135.1 371.6 C134.5 365.6 134.5 363.0 135.5 359.0 C136.4 355.1 136.5 352.1 140.8 348.0 C145.2 343.9 153.3 338.3 161.7 334.4 C170.2 330.5 183.2 327.5 191.4 324.6 C199.6 321.6 203.0 318.9 211.1 316.6 C219.2 314.4 232.4 311.1 240.2 310.8 C248.0 310.5 252.4 315.8 257.8 314.7 C263.2 313.7 266.9 306.8 272.6 304.5 C278.2 302.2 285.5 301.6 291.6 300.8 C297.7 299.9 304.5 299.3 309.0 299.3 C313.5 299.3 315.7 299.7 318.9 300.6 C322.1 301.6 324.6 304.9 328.2 304.8 C331.8 304.7 331.8 300.6 340.4 299.8 C349.0 298.9 368.2 299.0 379.7 299.8 C391.2 300.6 399.4 302.8 409.2 304.7 C419.0 306.6 430.9 308.2 438.6 311.1 C446.3 313.9 450.4 319.8 455.7 321.6 C460.9 323.4 463.0 320.2 470.2 321.7 C477.3 323.2 491.3 327.6 498.4 330.5 C505.5 333.4 509.2 333.9 512.6 339.0 C515.9 344.1 516.5 352.3 518.5 360.9 C520.5 369.6 522.8 381.1 524.5 390.7 C526.1 400.3 527.1 410.3 528.5 418.6 C529.8 427.0 531.1 433.2 532.5 440.7 C533.8 448.2 534.3 458.0 536.7 463.6 C539.1 469.2 544.6 469.8 546.8 474.3 C549.0 478.7 549.3 483.8 549.7 490.2 C550.1 496.7 550.2 507.5 549.0 513.0 C547.8 518.6 545.1 521.2 542.4 523.3 C539.8 525.4 537.3 526.3 533.2 525.9 C529.2 525.6 523.9 523.7 518.1 521.2 C512.3 518.7 506.0 514.6 498.3 510.8 C490.5 507.1 479.4 501.9 471.6 498.7 C463.7 495.5 457.3 493.1 451.2 491.6 C445.1 490.1 435.1 489.6 435.1 489.6 C435.1 489.6 432.8 503.3 431.5 509.2 C430.2 515.1 429.5 521.1 427.5 524.9 C425.4 528.7 427.2 530.6 419.3 531.8 C411.4 532.9 399.9 531.9 380.0 531.9 C360.1 531.9 319.5 531.9 300.0 531.9 C280.6 531.9 271.7 532.2 263.3 531.7 C254.8 531.3 252.7 531.5 249.4 529.2 C246.1 526.8 244.6 524.1 243.3 517.7 C242.1 511.3 241.9 490.8 241.9 490.8 C241.9 490.8 228.3 492.3 221.0 494.7 C213.8 497.0 206.3 500.8 198.6 504.9 C190.9 508.9 182.3 515.2 174.7 518.8 C167.2 522.4 158.8 525.5 153.4 526.4 C148.0 527.3 145.3 526.3 142.4 524.2 C139.5 522.0 137.2 519.3 136.0 513.6 C134.8 507.9 135.1 497.1 135.1 490.0 C135.1 482.9 134.5 476.2 135.9 471.1 C137.4 466.0 142.3 464.4 143.9 459.2 C145.5 454.1 145.6 448.3 145.6 440.0 C145.6 431.7 145.2 416.9 144.1 409.4 C143.0 401.9 140.5 401.4 139.0 395.1 C137.5 388.8 135.7 377.6 135.1 371.6 Z" fill="none" stroke="#f3dcc8" stroke-width="1" stroke-dasharray="0.9 5.5" stroke-linejoin="round"/>

<defs>
<pattern id="lat" width="11" height="19" patternUnits="userSpaceOnUse" patternTransform="translate(3 1)">
<rect width="11" height="19" fill="#fff8d8"/>
<g fill="none" stroke="#d85a82" stroke-width="1.25">
<path d="M5.5 0.4 L9.2 2.5 V6.9 L5.5 9 L1.8 6.9 V2.5 Z"/>
<path d="M0 9.9 L3.7 12 V16.4 L0 18.5 L-3.7 16.4 V12 Z"/>
<path d="M11 9.9 L14.7 12 V16.4 L11 18.5 L7.3 16.4 V12 Z"/>
<path d="M5.5 9 V11.6 M5.5 19 V17 M0 0 V0.8 M11 0 V0.8 M3.7 12 L1.8 10.2 M7.3 12 L9.2 10.2 M1.8 2.5 L0 1.4 M9.2 2.5 L11 1.4 M3.9 14.2 H7.1 M5.5 12.8 V15.8"/>
</g>
</pattern>
<filter id="dil" filterUnits="userSpaceOnUse" x="120" y="290" width="440" height="240"><feMorphology operator="dilate" radius="4.0"/></filter>
<filter id="ero" filterUnits="userSpaceOnUse" x="120" y="290" width="440" height="240"><feMorphology operator="erode" radius="4.0"/><feComponentTransfer><feFuncA type="linear" slope="4" intercept="-1.8"/></feComponentTransfer></filter>
<mask id="mk" maskUnits="userSpaceOnUse" x="120" y="290" width="440" height="240"><g filter="url(#ero)" fill="#fff"><g font-family="DejaVu Serif, serif" font-weight="bold"><g transform="matrix(1 -0.4 0 1 197.0 487.0)"><g transform="scale(0.4453 1)"><text x="-105.1" y="0" font-size="191.1">M</text></g><g transform="scale(-0.4453 1)"><text x="-105.1" y="0" font-size="191.1">M</text></g></g>
<g transform="matrix(1 -0.17 0 1 294.8 460.0)"><g transform="scale(0.5694 1)"><text x="-74.0" y="0" font-size="191.1">A</text></g><g transform="scale(-0.5694 1)"><text x="-74.0" y="0" font-size="191.1">A</text></g></g>
<g transform="matrix(1 0.13 0 1 392.0 464.0)"><g transform="scale(0.4453 1)"><text x="-105.1" y="0" font-size="191.1">M</text></g><g transform="scale(-0.4453 1)"><text x="-105.1" y="0" font-size="191.1">M</text></g></g>
<g transform="matrix(1 0.36 0 1 488.0 489.5)"><g transform="scale(0.5522 1)"><text x="-75.9" y="0" font-size="195.9">A</text></g><g transform="scale(-0.5522 1)"><text x="-75.9" y="0" font-size="195.9">A</text></g></g></g></g></mask>
</defs>
<g filter="url(#dil)" fill="#b2123c" stroke="#b2123c" stroke-width="1.6"><g font-family="DejaVu Serif, serif" font-weight="bold"><g transform="matrix(1 -0.4 0 1 197.0 487.0)"><g transform="scale(0.4453 1)"><text x="-105.1" y="0" font-size="191.1">M</text></g><g transform="scale(-0.4453 1)"><text x="-105.1" y="0" font-size="191.1">M</text></g></g>
<g transform="matrix(1 -0.17 0 1 294.8 460.0)"><g transform="scale(0.5694 1)"><text x="-74.0" y="0" font-size="191.1">A</text></g><g transform="scale(-0.5694 1)"><text x="-74.0" y="0" font-size="191.1">A</text></g></g>
<g transform="matrix(1 0.13 0 1 392.0 464.0)"><g transform="scale(0.4453 1)"><text x="-105.1" y="0" font-size="191.1">M</text></g><g transform="scale(-0.4453 1)"><text x="-105.1" y="0" font-size="191.1">M</text></g></g>
<g transform="matrix(1 0.36 0 1 488.0 489.5)"><g transform="scale(0.5522 1)"><text x="-75.9" y="0" font-size="195.9">A</text></g><g transform="scale(-0.5522 1)"><text x="-75.9" y="0" font-size="195.9">A</text></g></g></g></g>
<rect x="120" y="290" width="440" height="240" fill="url(#lat)" mask="url(#mk)"/>
<g transform="translate(256.6 518.2) scale(0.644 1)"><text x="0" y="0" font-family="Liberation Sans, sans-serif" font-weight="bold" font-size="54.5" fill="#c45a7c" stroke="#a03c60" stroke-width="1.4" style="vector-effect:non-scaling-stroke">EST. 2024</text></g>

<path d="M341.8 188.5 V642.5" stroke="#666" stroke-width="1" stroke-dasharray="1.6 2.3"/>
<path d="M27 414.3 H656" stroke="#333" stroke-width="1" stroke-dasharray="2.6 2.2"/>

<path d="M119.5 288 H564 V546.6 H119.5 Z" fill="none" stroke="#5a6a72" stroke-width="1" stroke-dasharray="4 8" stroke-dashoffset="2"/>
<rect x="113.9" y="281.9" width="10.6" height="10.6" fill="#000"/>
<rect x="336.5" y="281.9" width="10.6" height="10.6" fill="#000"/>
<rect x="558.7" y="281.9" width="10.6" height="10.6" fill="#000"/>
<rect x="113.9" y="408.9" width="10.6" height="10.6" fill="#000"/>
<rect x="558.7" y="408.9" width="10.6" height="10.6" fill="#000"/>
<rect x="113.9" y="540.7" width="10.6" height="10.6" fill="#000"/>
<rect x="336.5" y="540.7" width="10.6" height="10.6" fill="#000"/>
<rect x="558.7" y="540.7" width="10.6" height="10.6" fill="#000"/>
<rect x="334" y="406.6" width="15.2" height="15.2" fill="#00ff00"/>
<circle cx="572.2" cy="275.4" r="5.6" fill="#0000ff"/>

<!-- compass -->
<circle cx="664" cy="177.2" r="11.9" fill="#fffdf0" stroke="#f2b705" stroke-width="2.3"/>
<path d="M664 159 L666.6 174.6 L680 177.2 L666.6 179.8 L664 191.4 L661.4 179.8 L648.2 177.2 L661.4 174.6 Z" fill="#8c5241"/>
<circle cx="664" cy="177.2" r="1.3" fill="#a87060"/>
<text x="668.2" y="172.2" font-family="Liberation Serif, serif" font-weight="bold" font-size="15.2" fill="#111">N</text>
<!-- plus -->
<circle cx="664" cy="208.2" r="9.3" fill="#fff2a6" stroke="#c47a52" stroke-width="1.2"/>
<circle cx="664" cy="208.2" r="8.2" fill="none" stroke="#fbe3c8" stroke-width="1"/>
<path d="M657 208.2 H671 M664 201 V215.4" stroke="#222" stroke-width="1.4"/>
<!-- slider thumb -->
<rect x="651" y="300.2" width="25.8" height="15.6" fill="#f3c766"/>
<path d="M651 315.8 H676.8 V300.2 L675 302 V314 H652.8 Z" fill="#c9743c"/>
<rect x="653" y="302.4" width="21.6" height="11.4" fill="#b4b766"/>
<!-- minus -->
<circle cx="664" cy="325" r="9.3" fill="#fff2a6" stroke="#c47a52" stroke-width="1.2"/>
<circle cx="664" cy="325" r="8.2" fill="none" stroke="#fbe3c8" stroke-width="1"/>
<path d="M656.6 325 H671.4" stroke="#222" stroke-width="1.4"/>

</svg>
</div>
<div id="vscroll" class="abs"></div>
<div id="hscroll" class="abs"></div>

<svg class="abs" style="left:0;top:0" width="700" height="696" viewBox="0 0 700 696">
<path d="M685 169.6 L688.6 166 L692.2 169.6" fill="none" stroke="#444" stroke-width="1.5"/>
<path d="M685 661.6 L688.6 665.2 L692.2 661.6" fill="none" stroke="#444" stroke-width="1.5"/>
<path d="M12.8 676.6 L8.8 680.6 L12.8 684.6" fill="none" stroke="#444" stroke-width="1.5"/>
<path d="M669.4 676.6 L673.4 680.6 L669.4 684.6" fill="none" stroke="#444" stroke-width="1.5"/>
<rect x="681" y="406" width="15.5" height="17" fill="#cdcdcd"/>
<rect x="333" y="673.5" width="18" height="15.5" fill="#cdcdcd"/>
<rect x="0" y="157.5" width="2.2" height="535" fill="#b9c6ea"/><rect x="2.2" y="159" width="1" height="531" fill="#8c96b4"/>
</svg>


<div id="rightgap" class="abs"></div>
<div class="phead" style="top:132.5px;height:21.5px;background:linear-gradient(#c3d2e2,#d9e6f3)"><span style="top:4.5px">Objects</span></div>
<div class="phead" style="top:417px;height:22px;background:linear-gradient(#98b5d9,#bed5ee)"><span style="top:4px">Properties</span></div>
<div class="abs" style="left:704.4px;top:439px;width:296px;height:253px;background:#f0f0f0"></div>
<div class="cb" style="left:717.5px;top:474px"></div>
<div class="cb" style="left:782.5px;top:474px"></div>
<div class="cb" style="left:848.5px;top:474px"></div>
<span class="lbl" style="left:711px;top:445.5px;letter-spacing:0.2px">Color</span>
<span class="lbl" style="left:750px;top:444px">Interactive</span>
<span class="lbl" style="left:809.4px;top:445.5px;letter-spacing:0.25px">Notes</span>
<span class="lbl" style="left:734.8px;top:474px;font-size:10px">Position</span>
<span class="lbl" style="left:798.8px;top:474px;font-size:10px;letter-spacing:0.2px">Topstitch</span>
<span class="lbl" style="left:865.6px;top:474px;font-size:10px;letter-spacing:0.1px">Fabric Preview</span>
<span class="lbl" style="left:723.5px;top:504.5px">Material:</span>
<span class="lbl" style="left:723.5px;top:530px;letter-spacing:0.2px">Width (mm):</span>
<div class="inp" style="left:770.3px;top:500px;width:144px;height:18px;font-size:10.3px;line-height:18px;padding-left:3.4px">Hand cut in hoop</div>
<div class="btn" style="left:897.4px;top:501.4px;width:16.2px;height:15.8px;background:#f0f0f0"></div>
<div class="inp" style="left:785.6px;top:526px;width:35.6px;height:21.4px;font-size:10.5px;line-height:18px;padding-left:4.4px">4.1</div>
<div class="btn" style="left:824.3px;top:527.2px;width:15.8px;height:17.6px;background:#fbe9d6"></div>

<svg class="abs" style="left:700px;top:132px" width="300" height="564" viewBox="700 132 300 564" font-family="Liberation Sans, sans-serif">
<defs>
<linearGradient id="gLock" x1="0" y1="0" x2="0" y2="1"><stop offset="0" stop-color="#fbd24a"/><stop offset="0.5" stop-color="#f6b91c"/><stop offset="1" stop-color="#f3a712"/></linearGradient>
</defs>
<!-- pins -->
<path d="M984.6 140.6 H989.6 M985.4 140.8 V145.2 M988.8 140.8 V145.2 M983.4 145.4 H990.8 M987.1 145.6 V148.6" stroke="#111" stroke-width="1.3" fill="none"/><rect x="986.6" y="141" width="2.4" height="4" fill="#111"/>
<rect x="998" y="138.2" width="2" height="11.2" fill="#d24a4a"/>
<path d="M984.6 424.6 H989.6 M985.4 424.8 V429.2 M988.8 424.8 V429.2 M983.4 429.4 H990.8 M987.1 429.6 V432.6" stroke="#111" stroke-width="1.3" fill="none"/><rect x="986.6" y="425" width="2.4" height="4" fill="#111"/>
<rect x="998" y="422.2" width="2" height="11.2" fill="#d24a4a"/>
<!-- objects toolbar icons -->
<g>
<rect x="710.6" y="161.6" width="5.6" height="5.6" fill="#e6f0fb" stroke="#8fb4e0" stroke-width="0.9"/><rect x="710.6" y="171.2" width="5.6" height="5.6" fill="#e6f0fb" stroke="#8fb4e0" stroke-width="0.9"/><rect x="719.6" y="166" width="5.8" height="5.8" fill="#e6f0fb" stroke="#8fb4e0" stroke-width="0.9"/>
<path d="M712.2 164.4 H714.6 M713.4 163.2 V165.6 M712.2 174 H714.6 M713.4 172.8 V175.2 M721.2 168.9 H723.8 M722.5 167.6 V170.2" stroke="#111" stroke-width="1.1"/>
<path d="M718 163.2 H721 M718 174.2 H721" stroke="#888" stroke-width="0.9"/>
<rect x="734.6" y="161.4" width="6" height="6" rx="1" fill="#0c1c3c"/><rect x="734.6" y="171" width="6" height="6" rx="1" fill="#0c1c3c"/><rect x="744" y="165.8" width="6.2" height="6.2" rx="1" fill="#0c1c3c"/>
<path d="M736.2 164.4 H739 M737.6 163 V165.8 M736.2 174 H739 M737.6 172.6 V175.4 M745.7 168.9 H748.5 M747.1 167.5 V170.3" stroke="#fff" stroke-width="1.2"/>
<path d="M742.6 163.2 H745.6 M742.6 174.2 H745.6" stroke="#888" stroke-width="0.9"/>
<path d="M762 167.4 V165.4 Q762 161.6 766.9 161.6 Q771.8 161.6 771.8 165.4 V167.4" fill="none" stroke="#b4b8bc" stroke-width="2"/>
<rect x="759.8" y="167" width="14.2" height="9.6" rx="0.8" fill="url(#gLock)" stroke="#f0a030" stroke-width="0.7"/>
<path d="M786.6 167.4 V165.4 Q786.6 161.6 791.4 161.6 Q796.2 161.6 796.2 165.4 V167.4" fill="none" stroke="#b4b8bc" stroke-width="2"/>
<rect x="784.4" y="167.2" width="14" height="9.4" fill="#fff" stroke="#111" stroke-width="1.1"/><path d="M784.4 167.2 L798.4 176.6 M798.4 167.2 L784.4 176.6" stroke="#111" stroke-width="1"/>
<path d="M811 166 V165 Q811 161.6 815.8 161.6 Q820.6 161.6 820.6 165" fill="none" stroke="#b4b8bc" stroke-width="2"/>
<rect x="808.8" y="167" width="14.2" height="9.6" rx="0.8" fill="url(#gLock)" stroke="#f0a030" stroke-width="0.7"/>
</g>
<!-- list box -->
<rect x="704.5" y="182.5" width="300" height="229.5" fill="#fff"/><path d="M704.5 412 V182.5 H1000" fill="none" stroke="#a0a0a0" stroke-width="1"/><path d="M705 412 H1000" stroke="#e3e3e3" stroke-width="1"/>
<path d="M705.5 411.5 V183.5 H1000" fill="none" stroke="#696969" stroke-width="1"/>
<!-- tree -->
<path d="M722.5 200.5 V235.5 M722.5 200.5 H733.5 M742.5 200.5 H757 M722.5 235.5 H733.5 M742.5 235.5 H757" fill="none" stroke="#8c8c8c" stroke-width="1" stroke-dasharray="1 1" shape-rendering="crispEdges"/>
<text x="735.4" y="205.2" font-size="12">1</text>
<text x="735.2" y="240" font-size="12">2</text>
<rect x="792" y="183.8" width="89" height="34" fill="#0000ff"/>
<text x="794.6" y="205.2" font-size="11.5" fill="#fff">Mama Est Patch</text>
<text x="794.6" y="240" font-size="11.5" fill="#000">Letters</text>
<!-- thumbnails -->
<path d="M759 199.6 Q758.4 196.4 761.4 195.4 Q763.4 192.6 767 193 Q770 190.8 774 191.8 Q778 190.6 781 192.8 Q785 192.4 786.6 195.2 Q788.8 196.6 788 199.6 Q789.4 203 788.2 206.6 Q787 208.6 784 207.6 L782 206.8 Q782 209.6 779.4 209.8 H768.6 Q766 209.8 766 207 L763.4 207.8 Q760 208.6 759 206 Q758 202.6 759 199.6 Z" fill="#fcd0ba" stroke="#f9b48e" stroke-width="2.6" stroke-linejoin="round"/>
<path d="M760.8 198.6 L761.6 196.2 L767.4 194.4 L774 193.8 L780.6 194.6 L785.8 196.6 L786.2 199 L786.2 205.8 L781 204.2 Q774 202.8 766.6 204.2 L760.6 206 Z" fill="#d90a3c"/>
<path d="M769 206.2 H779" stroke="#fff" stroke-width="1.4"/>
<text x="757.8" y="239.3" font-size="11.6" font-weight="bold" fill="#f6668a" stroke="#f6668a" stroke-width="0.5" textLength="31.6" lengthAdjust="spacingAndGlyphs">EST. 2024</text>
<!-- callout -->
<text x="752.6" y="304.6" font-family="DejaVu Sans, sans-serif" font-weight="bold" font-size="32" fill="#ff0000" textLength="177" lengthAdjust="spacingAndGlyphs">Interactive</text>
<text x="812.6" y="335.8" font-family="DejaVu Sans, sans-serif" font-weight="bold" font-size="32" fill="#ff0000" textLength="55.4" lengthAdjust="spacingAndGlyphs">Tab</text>
<path d="M839.6 348.4 L787.4 420" stroke="#ff0000" stroke-width="4.4" stroke-linecap="round"/>
<path d="M776.3 432.8 L778.4 414.6 L792.6 424 Z" fill="#ff0000"/>
<!-- tabs -->
<path d="M707.5 460 V444.5 Q707.5 443.5 708.5 443.5 H743.5" fill="none" stroke="#fff" stroke-width="1"/>
<path d="M744.5 460 V442.5 Q744.5 441.5 745.5 441.5 H804" fill="none" stroke="#fff" stroke-width="1"/>
<path d="M805 442 V460" stroke="#696969" stroke-width="1.2"/><path d="M804 443 V460" stroke="#a0a0a0" stroke-width="1"/>
<path d="M806 443.5 H841.6" fill="none" stroke="#fff" stroke-width="1"/><path d="M842.6 444 V459.5" fill="none" stroke="#696969" stroke-width="1.1"/><path d="M841.6 444.5 V459.5" stroke="#a0a0a0" stroke-width="1"/>
<rect x="746.5" y="443.5" width="57" height="15" fill="none" stroke="#222" stroke-width="1" stroke-dasharray="1 1" shape-rendering="crispEdges"/>
<path d="M705 460.5 H744.5 M805.5 460.5 H992" stroke="#fff" stroke-width="1"/>
<!-- check marks -->
<path d="M720.2 479.4 L722.6 482.2 L726.8 477.2" fill="none" stroke="#000" stroke-width="1.6"/>
<path d="M785.2 479.4 L787.6 482.2 L791.8 477.2" fill="none" stroke="#000" stroke-width="1.6"/>
<!-- combo arrow -->
<path d="M902.2 507.4 H909.4 L905.8 511.2 Z" fill="#000"/>
<!-- small btn icon -->
<path d="M832.2 531.6 V540.4 M829 534.6 H835.4 V537.2 H829 Z" fill="none" stroke="#555" stroke-width="0.9"/>
<!-- scrollbar -->
<rect x="993" y="461" width="7" height="230" fill="#f0f0f0"/>
<rect x="993.6" y="478" width="7" height="17" fill="#cdcdcd"/>
<path d="M995.4 470 L999 466.4 L1002 470" fill="none" stroke="#444" stroke-width="1.4"/>
<path d="M995.4 679.6 L999 683.2 L1002 679.6" fill="none" stroke="#444" stroke-width="1.4"/>
<path d="M992.5 461 V691" stroke="#fafafa" stroke-width="1"/>
<!-- borders -->
<path d="M705.5 461 V690.5 " fill="none" stroke="#f8f8f8" stroke-width="1"/>
<path d="M704.5 692.2 H1000" stroke="#696969" stroke-width="1.2"/>
</svg>


</body>
</html>
